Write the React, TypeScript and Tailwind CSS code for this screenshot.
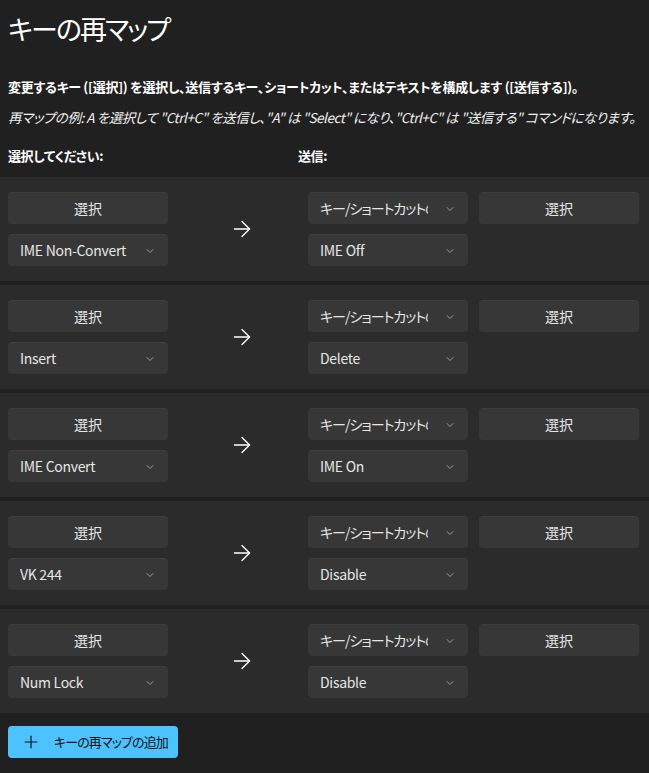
import { ArrowRight, ChevronDown, Plus } from "lucide-react"

const rows = [
  { from: "IME Non-Convert", to: "IME Off" },
  { from: "Insert", to: "Delete" },
  { from: "IME Convert", to: "IME On" },
  { from: "VK 244", to: "Disable" },
  { from: "Num Lock", to: "Disable" },
]

function Btn({ label }: { label: string }) {
  return (
    <button className="h-8 w-40 rounded-[4px] border-t border-[#3e3e3e] bg-[#373737] text-[14px] text-[#e6e6e6]">
      {label}
    </button>
  )
}

function Combo({ label, tight }: { label: string; tight?: boolean }) {
  return (
    <div className="flex h-8 w-40 items-center rounded-[4px] border-t border-[#3e3e3e] bg-[#373737] pl-3 pr-3 text-[14px] text-[#e6e6e6]">
      <span
        className={
          tight
            ? "mr-4 flex-1 overflow-hidden whitespace-nowrap tracking-[-1px]"
            : "mr-4 flex-1 overflow-hidden whitespace-nowrap tracking-[-0.3px]"
        }
      >
        {label}
      </span>
      <ChevronDown className="h-3 w-3 shrink-0 text-[#bdbdbd]" strokeWidth={1.5} />
    </div>
  )
}

export default function App() {
  return (
    <div
      className="min-h-screen w-full overflow-hidden bg-[#202020] text-white [font-feature-settings:'palt']"
      style={{ fontFamily: '"Noto Sans CJK JP", "Noto Sans", sans-serif' }}
    >
      <h1 className="px-2 pt-[9px] text-[27px] font-normal leading-[40px] tracking-[-2px]">キーの再マップ</h1>

      <p className="mt-[28px] whitespace-nowrap px-2 text-[13px] font-bold leading-5 tracking-[-0.25px]">
        変更するキー ([選択]) を選択し、送信するキー、ショートカット、またはテキストを構成します ([送信する])。
      </p>
      <p className="mt-[10px] whitespace-nowrap px-2 text-[13.5px] italic leading-5 tracking-[-0.45px] text-[#f0f0f0]">
        再マップの例: A を選択して "Ctrl+C" を送信し、"A" は "Select" になり、"Ctrl+C" は "送信する" コマンドになります。
      </p>

      <div className="mt-[19px] flex px-2 text-[13px] font-bold leading-5 tracking-[-0.4px]">
        <span className="w-[290px]">選択してください:</span>
        <span>送信:</span>
      </div>

      <div className="mt-[11px] flex flex-col gap-1">
        {rows.map((r, i) => (
          <div key={i} className="flex items-center bg-[#2b2b2b] px-2 py-[15px]">
            <div className="flex flex-col gap-[10px]">
              <Btn label="選択" />
              <Combo label={r.from} />
            </div>
            <div className="flex w-[140px] justify-center pl-2">
              <ArrowRight className="h-[26px] w-[26px] text-white" strokeWidth={1.2} />
            </div>
            <div className="flex flex-col gap-[10px] self-start">
              <Combo label="キー/ショートカットの送信" tight />
              <Combo label={r.to} />
            </div>
            <div className="ml-[11px] self-start">
              <Btn label="選択" />
            </div>
          </div>
        ))}
      </div>

      <div className="px-2 pt-[13px] pb-4">
        <button className="flex h-8 items-center gap-[13px] rounded-[4px] bg-[#4cc2ff] pl-[13px] pr-[10px] text-[13px] tracking-[-0.9px] text-[#111]">
          <Plus className="h-5 w-5" strokeWidth={1.4} />
          <span>キーの再マップの追加</span>
        </button>
      </div>
    </div>
  )
}
